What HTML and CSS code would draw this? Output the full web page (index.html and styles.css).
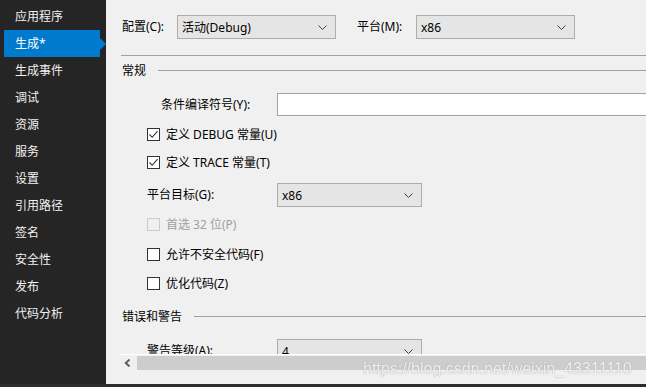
FILE: index.html
```html
<!DOCTYPE html>
<html lang="zh-CN">
<head>
<meta charset="utf-8">
<title>项目属性</title>
<link rel="stylesheet" href="styles.css">
</head>
<body>
<div class="window">
  <div class="top">
    <nav class="sidebar">
      <div class="nav-item">应用程序</div>
      <div class="nav-item active">生成*</div>
      <div class="nav-item">生成事件</div>
      <div class="nav-item">调试</div>
      <div class="nav-item">资源</div>
      <div class="nav-item">服务</div>
      <div class="nav-item">设置</div>
      <div class="nav-item">引用路径</div>
      <div class="nav-item">签名</div>
      <div class="nav-item">安全性</div>
      <div class="nav-item">发布</div>
      <div class="nav-item">代码分析</div>
    </nav>
    <main class="main">
      <div class="viewport">
        <div class="config-row">
          <span class="lbl lbl-config">配置(C):</span>
          <div class="select sel-config"><span>活动(Debug)</span><svg class="chev" width="9" height="5" viewBox="0 0 9 5"><path d="M0.5 0.5 L4.5 4.5 L8.5 0.5" fill="none" stroke="#404040" stroke-width="1"/></svg></div>
          <span class="lbl lbl-platform">平台(M):</span>
          <div class="select sel-platform"><span>x86</span><svg class="chev" width="9" height="5" viewBox="0 0 9 5"><path d="M0.5 0.5 L4.5 4.5 L8.5 0.5" fill="none" stroke="#404040" stroke-width="1"/></svg></div>
        </div>
        <div class="hr"></div>
        <div class="section s-general"><span>常规</span><i class="line"></i></div>
        <div class="field-row r-symbols">
          <span class="lbl lbl-symbols">条件编译符号(Y):</span>
          <div class="textbox"></div>
        </div>
        <div class="cb-row r-debug"><span class="cb checked"><svg width="11" height="11" viewBox="0 0 11 11"><path d="M1.5 5.5 L4.2 8.3 L9.5 2.2" fill="none" stroke="#333" stroke-width="1.1"/></svg></span><span class="cb-lbl">定义 DEBUG 常量(U)</span></div>
        <div class="cb-row r-trace"><span class="cb checked"><svg width="11" height="11" viewBox="0 0 11 11"><path d="M1.5 5.5 L4.2 8.3 L9.5 2.2" fill="none" stroke="#333" stroke-width="1.1"/></svg></span><span class="cb-lbl">定义 TRACE 常量(T)</span></div>
        <div class="field-row r-target">
          <span class="lbl lbl-target">平台目标(G):</span>
          <div class="select sel-small"><span>x86</span><svg class="chev" width="9" height="5" viewBox="0 0 9 5"><path d="M0.5 0.5 L4.5 4.5 L8.5 0.5" fill="none" stroke="#404040" stroke-width="1"/></svg></div>
        </div>
        <div class="cb-row r-prefer disabled"><span class="cb"></span><span class="cb-lbl">首选 32 位(P)</span></div>
        <div class="cb-row r-unsafe"><span class="cb"></span><span class="cb-lbl">允许不安全代码(F)</span></div>
        <div class="cb-row r-optimize"><span class="cb"></span><span class="cb-lbl">优化代码(Z)</span></div>
        <div class="section s-errors"><span>错误和警告</span><i class="line"></i></div>
        <div class="field-row r-warn">
          <span class="lbl lbl-target">警告等级(A):</span>
          <div class="select sel-small"><span>4</span><svg class="chev" width="9" height="5" viewBox="0 0 9 5"><path d="M0.5 0.5 L4.5 4.5 L8.5 0.5" fill="none" stroke="#404040" stroke-width="1"/></svg></div>
        </div>
      </div>
      <div class="hscroll">
        <span class="arrow"><svg width="7" height="8" viewBox="0 0 7 8"><path d="M5.5 0.5 L1.8 4 L5.5 7.5" fill="none" stroke="#606060" stroke-width="2"/></svg></span>
        <span class="thumb"></span>
      </div>
    </main>
  </div>
  <div class="bottom-strip"></div>
  <div class="watermark">https://blog.csdn.net/weixin_43311110</div>
</div>
</body>
</html>
```

FILE: styles.css
```css
* { box-sizing: border-box; }
html, body { margin: 0; padding: 0; }
body {
  width: 646px;
  height: 387px;
  overflow: hidden;
  background: #f0f0f0;
  font-family: "Noto Sans", "Noto Sans CJK SC", sans-serif;
  font-size: 12px;
  color: #000;
}
.window {
  position: relative;
  width: 646px;
  height: 387px;
  display: flex;
  flex-direction: column;
}
.top {
  display: flex;
  height: 384px;
}
.sidebar {
  width: 106px;
  flex: none;
  background: #252526;
  padding-top: 3px;
}
.nav-item {
  position: relative;
  height: 27px;
  line-height: 27px;
  margin-left: 4px;
  width: 96px;
  padding-left: 11px;
  color: #f1f1f1;
  white-space: nowrap;
}
.nav-item.active { background: #007acc; color: #fff; }
.nav-item.active::after {
  content: "";
  position: absolute;
  right: -6px;
  top: 8px;
  border-left: 6px solid #007acc;
  border-top: 6px solid transparent;
  border-bottom: 6px solid transparent;
}
.main {
  flex: 1;
  min-width: 0;
  display: flex;
  flex-direction: column;
  padding-left: 14px;
}
.viewport {
  height: 354px;
  flex: none;
  overflow: hidden;
  display: flex;
  flex-direction: column;
}
.lbl { white-space: nowrap; line-height: 16px; flex: none; }
.config-row {
  margin-top: 15px;
  height: 24px;
  display: flex;
  align-items: center;
  padding-left: 2px;
}
.lbl-config { width: 55px; }
.lbl-platform { margin-left: 21px; width: 59px; }
.select {
  height: 24px;
  background: #e5e5e5;
  border: 1px solid #adadad;
  display: flex;
  align-items: center;
  justify-content: space-between;
  padding: 0 8px 0 4px;
  flex: none;
  white-space: nowrap;
}
.sel-config, .sel-platform { width: 159px; }
.sel-small { width: 145px; }
.chev { flex: none; }
.hr {
  margin-top: 16px;
  margin-left: 1px;
  height: 1px;
  background: #a0a0a0;
  flex: none;
}
.section {
  height: 13px;
  display: flex;
  align-items: center;
  padding-left: 2px;
  flex: none;
}
.section span { white-space: nowrap; line-height: 13px; }
.section .line {
  flex: 1;
  height: 1px;
  background: #a0a0a0;
  margin-left: 12px;
}
.s-general { margin-top: 8px; }
.s-errors { margin-top: 20px; }
.field-row {
  display: flex;
  align-items: center;
  flex: none;
}
.r-symbols { margin-top: 16px; height: 23px; padding-left: 41px; }
.lbl-symbols { width: 116px; }
.textbox {
  width: 420px;
  height: 23px;
  background: #fff;
  border: 1px solid #a0a0a0;
  flex: none;
}
.r-target { margin-top: 14px; height: 24px; padding-left: 27px; }
.r-warn { margin-top: 16px; height: 24px; padding-left: 27px; }
.lbl-target { width: 130px; }
.cb-row {
  display: flex;
  align-items: center;
  height: 13px;
  padding-left: 27px;
  flex: none;
}
.cb {
  width: 13px;
  height: 13px;
  border: 1px solid #333;
  background: #fff;
  flex: none;
  display: flex;
  align-items: center;
  justify-content: center;
}
.cb-lbl { margin-left: 6px; white-space: nowrap; line-height: 16px; }
.r-debug { margin-top: 12px; }
.r-trace { margin-top: 15px; }
.r-prefer { margin-top: 11px; }
.r-unsafe { margin-top: 17px; }
.r-optimize { margin-top: 16px; }
.disabled .cb { border-color: #cccccc; background: #f0f0f0; }
.disabled .cb-lbl { color: #a0a0a0; }
.hscroll {
  height: 17px;
  flex: none;
  border-top: 1px solid #ffffff;
  display: flex;
  align-items: center;
}
.arrow { width: 17px; display: flex; justify-content: center; padding-right: 2px; }
.thumb {
  flex: 1;
  height: 14px;
  background: #cdcdcd;
}
.bottom-strip {
  height: 3px;
  background: #2d2d30;
  flex: none;
}
.watermark {
  position: absolute;
  left: 363px;
  top: 359px;
  font-family: "Liberation Sans", Arial, sans-serif;
  font-size: 16px;
  line-height: 20px;
  color: rgba(255, 255, 255, 0.9);
  text-shadow: 0 0 1px #8a8a8a;
  white-space: nowrap;
}
```
